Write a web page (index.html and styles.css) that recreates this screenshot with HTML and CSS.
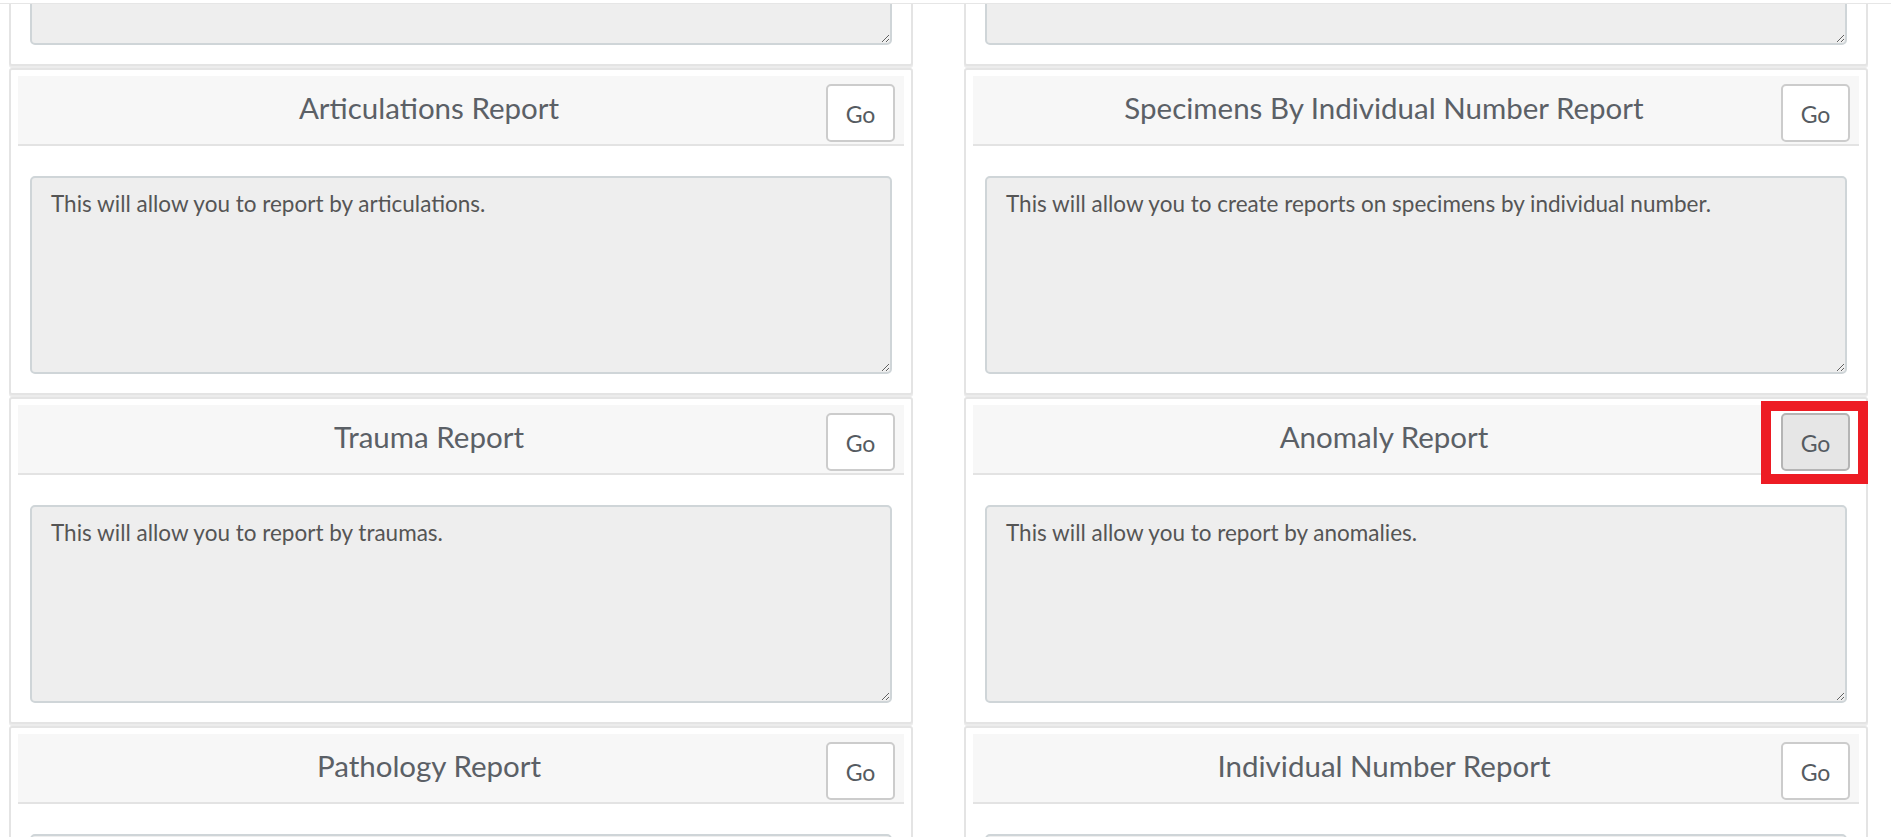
FILE: index.html
```html
<!DOCTYPE html>
<html lang="en">
<head>
<meta charset="utf-8">
<title>Reports</title>
<link rel="stylesheet" href="styles.css">
</head>
<body>
<div class="topbar"></div>
<main class="grid">
  <section class="card">
    <div class="card-head"><h2 class="card-title">Specimens Report</h2><button class="go">Go</button></div>
    <div class="card-body"><textarea class="desc" readonly>This will allow you to report by specimens.</textarea></div>
  </section>
  <section class="card">
    <div class="card-head"><h2 class="card-title">Bones Report</h2><button class="go">Go</button></div>
    <div class="card-body"><textarea class="desc" readonly>This will allow you to report by bones.</textarea></div>
  </section>

  <section class="card">
    <div class="card-head"><h2 class="card-title">Articulations Report</h2><button class="go">Go</button></div>
    <div class="card-body"><textarea class="desc" readonly>This will allow you to report by articulations.</textarea></div>
  </section>
  <section class="card">
    <div class="card-head"><h2 class="card-title">Specimens By Individual Number Report</h2><button class="go">Go</button></div>
    <div class="card-body"><textarea class="desc" readonly>This will allow you to create reports on specimens by individual number.</textarea></div>
  </section>

  <section class="card">
    <div class="card-head"><h2 class="card-title">Trauma Report</h2><button class="go">Go</button></div>
    <div class="card-body"><textarea class="desc" readonly>This will allow you to report by traumas.</textarea></div>
  </section>
  <section class="card">
    <div class="card-head"><h2 class="card-title">Anomaly Report</h2><span class="annot"><button class="go is-active">Go</button></span></div>
    <div class="card-body"><textarea class="desc" readonly>This will allow you to report by anomalies.</textarea></div>
  </section>

  <section class="card">
    <div class="card-head"><h2 class="card-title">Pathology Report</h2><button class="go">Go</button></div>
    <div class="card-body"><textarea class="desc" readonly>This will allow you to report by pathologies.</textarea></div>
  </section>
  <section class="card">
    <div class="card-head"><h2 class="card-title">Individual Number Report</h2><button class="go">Go</button></div>
    <div class="card-body"><textarea class="desc" readonly>This will allow you to report by individual number.</textarea></div>
  </section>
</main>
</body>
</html>
```
FILE: styles.css
```css
* { box-sizing: border-box; }

html, body { height: 100%; }

body {
  margin: 0;
  background: #fff;
  font-family: Lato, "Noto Sans", sans-serif;
  overflow: hidden;
}

.topbar {
  position: fixed;
  top: 0;
  left: 0;
  right: 0;
  height: 4px;
  background: #fff;
  border-bottom: 1px solid #e6e6e6;
  z-index: 10;
}

.grid {
  display: grid;
  grid-template-columns: 904px 904px;
  column-gap: 51px;
  row-gap: 2px;
  padding-left: 9px;
  margin-top: -261px;
}

.card {
  height: 327px;
  border: 2px solid #e4e4e4;
  border-radius: 3px;
  padding: 6px 7px 19px;
  box-shadow: 0 2px 0 #ececec;
  background: #fff;
}

.card-head {
  display: flex;
  align-items: center;
  height: 70px;
  background: #f7f7f7;
  border-bottom: 2px solid #e3e3e3;
  padding-right: 9px;
}

.card-title {
  flex: 1;
  margin: 0 -14px 5px 0;
  text-align: center;
  font-weight: 400;
  font-size: 29.5px;
  color: #5b6066;
}

.go {
  margin-top: 5px;
  width: 69px;
  height: 58px;
  padding: 2px 0 0;
  border: 2px solid #cccccc;
  border-radius: 5px;
  background: #fff;
  font-family: inherit;
  font-size: 23px;
  color: #555b61;
}

.annot {
  position: relative;
  display: flex;
  margin-top: 5px;
  z-index: 0;
}

.annot::before {
  content: "";
  position: absolute;
  top: -12px;
  left: -20px;
  right: -18px;
  bottom: -13px;
  border: 10px solid #ed1c24;
  background: #fff;
  z-index: -1;
}

.annot .go { margin-top: 0; }

.go.is-active {
  background: #e6e6e6;
  border-color: #b4b4b4;
}

.card-body {
  padding: 30px 12px 0;
}

.desc {
  display: block;
  width: 100%;
  height: 198px;
  margin: 0;
  border: 2px solid #cfd5d8;
  border-radius: 5px;
  background: #eeeeee;
  padding: 11px 19px;
  font-family: inherit;
  font-size: 22.5px;
  line-height: 30px;
  color: #555;
  resize: vertical;
  outline: none;
}
```
